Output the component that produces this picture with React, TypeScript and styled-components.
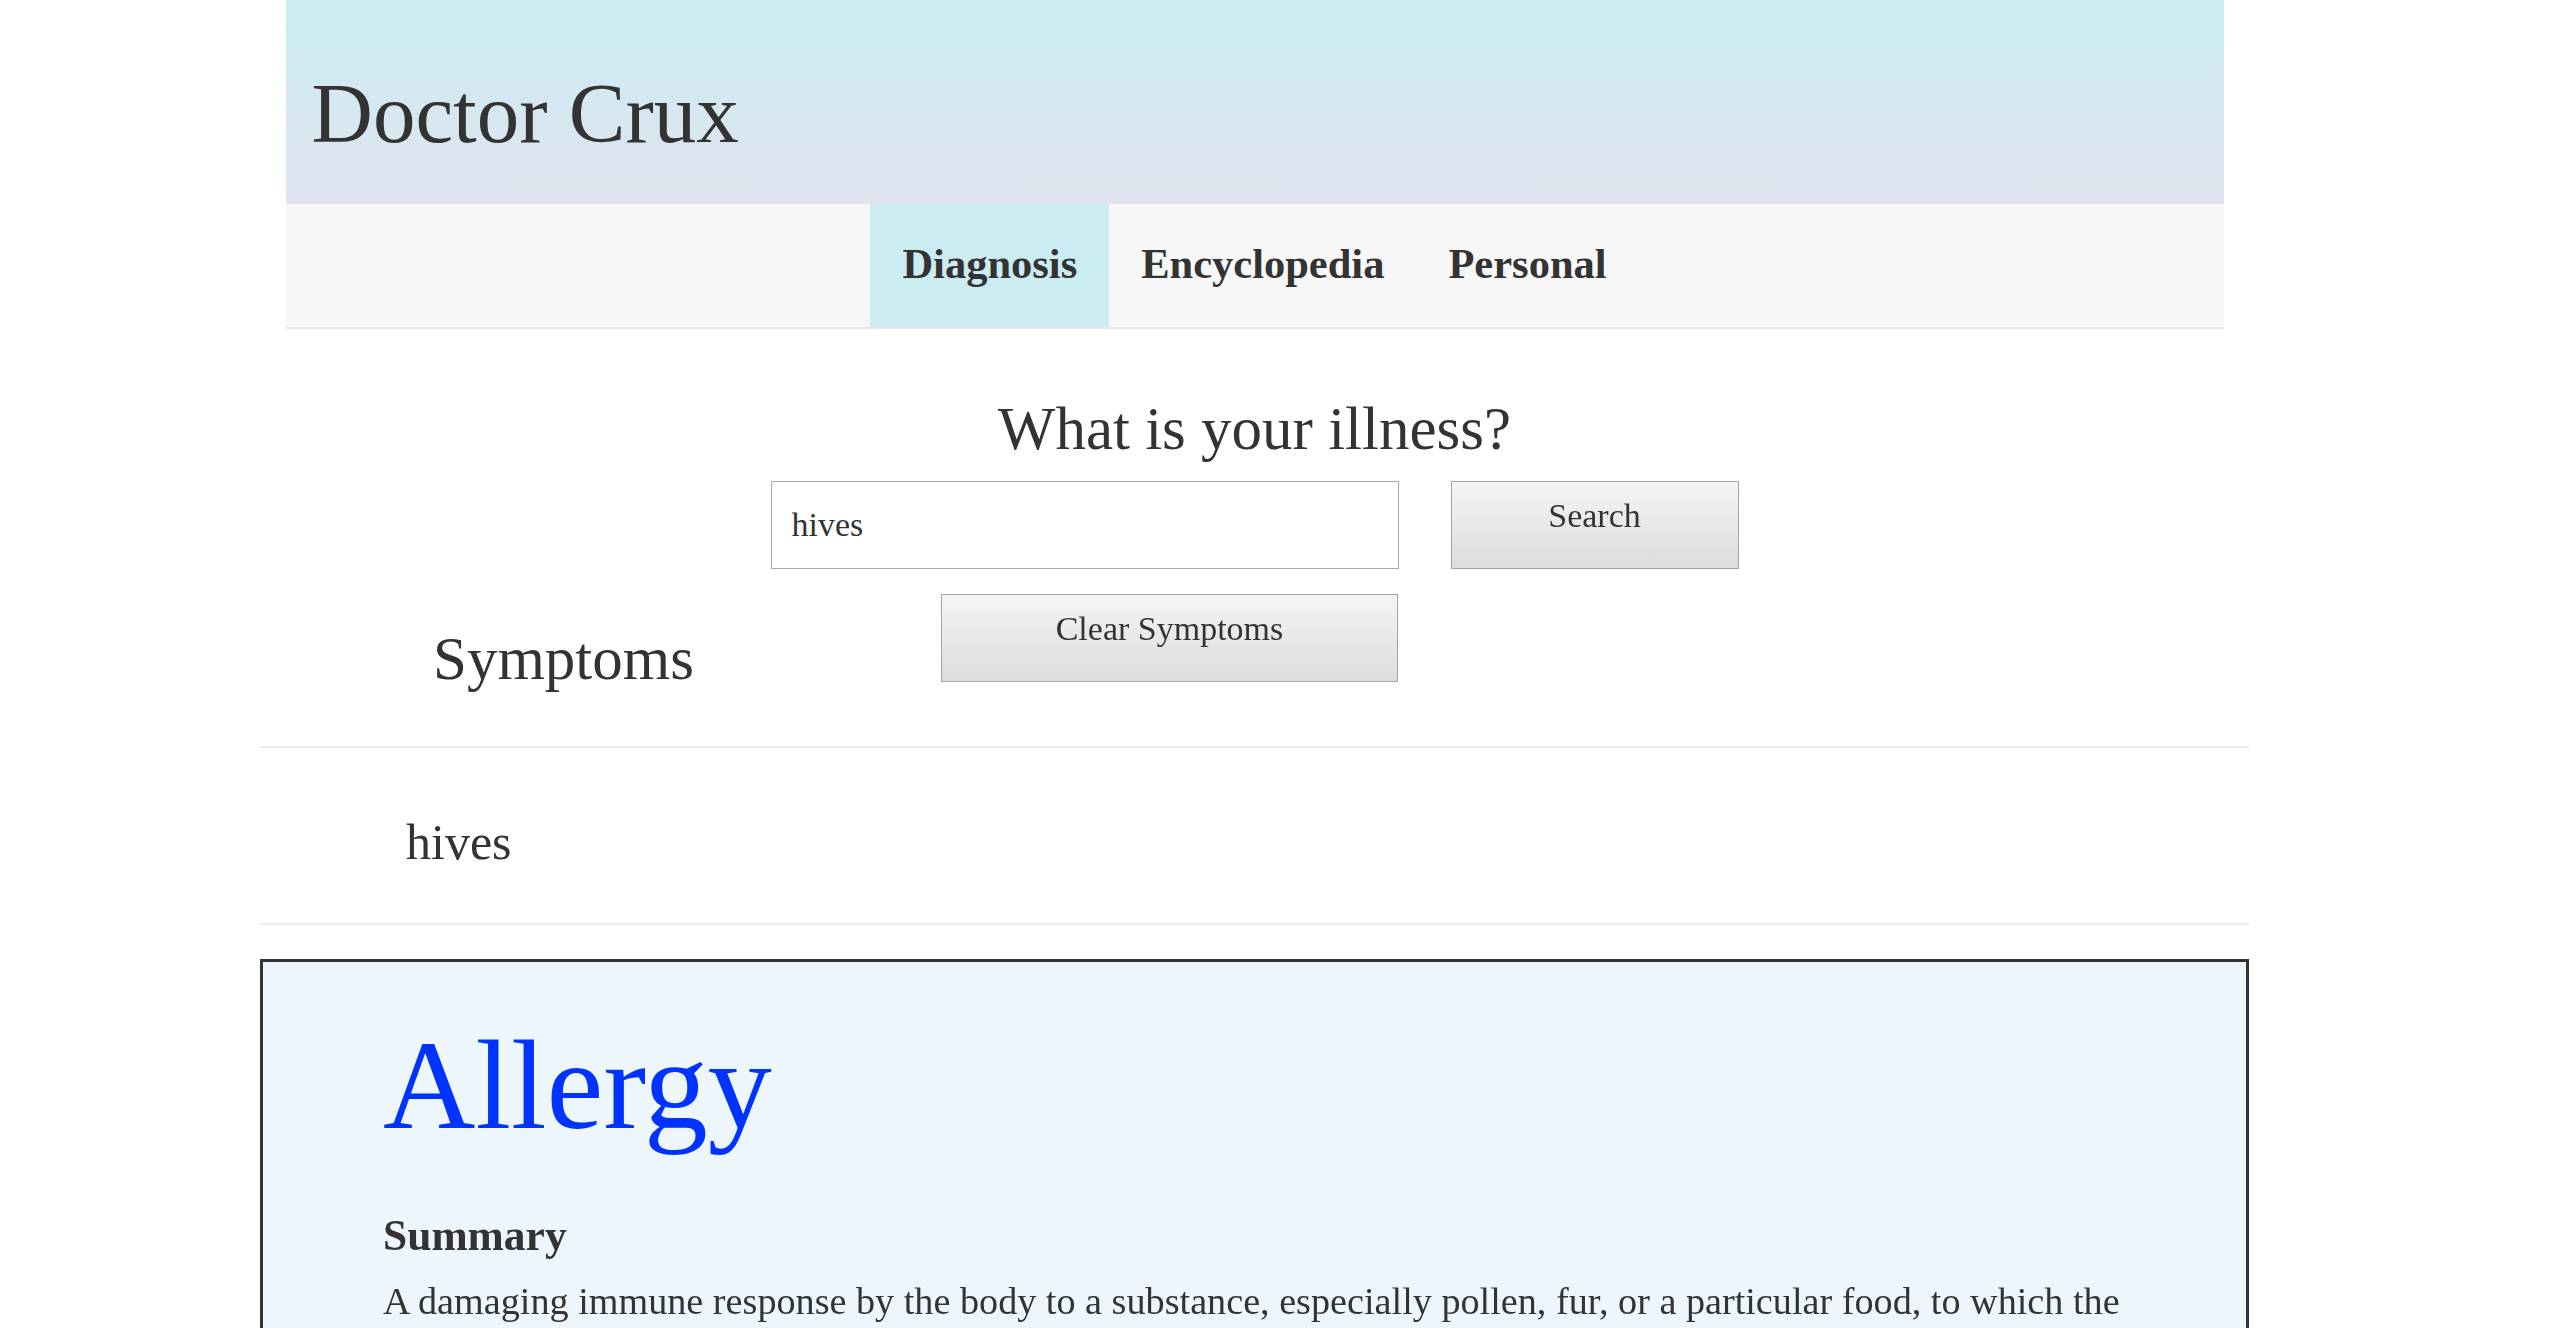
import React, { useEffect, useRef } from "react";
import styled, { createGlobalStyle } from "styled-components";

const GlobalStyle = createGlobalStyle`
  html, body {
    margin: 0;
    padding: 0;
    background: #ffffff;
  }
  body {
    font-family: "Liberation Serif", "Times New Roman", serif;
    color: #333333;
  }
  * { box-sizing: border-box; }
`;

const Page = styled.div`
  width: 2509px;
  padding-bottom: 80px;
`;

const Header = styled.header`
  width: 1938px;
  margin: 0 auto;
`;

const Banner = styled.div`
  background: linear-gradient(to bottom, #cbecf3, #dfe4ef);
  padding: 64px 26px 42px;
`;

const SiteTitle = styled.h1`
  margin: 0;
  font-size: 85px;
  line-height: 98px;
  font-weight: normal;
  color: #333333;
`;

const Nav = styled.nav`
  display: flex;
  justify-content: center;
  background: #f7f7f7;
  border-bottom: 2px solid #e6e6e6;
`;

const NavItem = styled.a<{ $active?: boolean }>`
  display: block;
  padding: 35px 32px 39px;
  font-size: 42.5px;
  line-height: 49px;
  font-weight: bold;
  color: #333333;
  text-decoration: none;
  background: ${(p) => (p.$active ? "#cbecf3" : "transparent")};
`;

const Main = styled.main`
  width: 1989px;
  margin: 0 auto;
`;

const SearchTitle = styled.h2`
  margin: 65px 0 0;
  font-size: 61px;
  line-height: 70px;
  font-weight: normal;
  text-align: center;
`;

const SearchRow = styled.div`
  display: flex;
  justify-content: center;
  gap: 52px;
  margin-top: 17px;
`;

const SearchInput = styled.input`
  width: 628px;
  height: 88px;
  border: 1px solid #a9a9a9;
  padding: 0 20px;
  font-family: "Liberation Serif", "Times New Roman", serif;
  font-size: 34px;
  color: #333333;
  background: #ffffff;
  outline: none;
  caret-color: #333333;
`;

const GrayButton = styled.button<{ $width: number }>`
  width: ${(p) => p.$width}px;
  height: 88px;
  padding: 14px 0 33px;
  border: 1px solid #a3a3a3;
  border-radius: 0;
  background: linear-gradient(to bottom, #f5f5f5, #dcdcdc);
  font-family: "Liberation Serif", "Times New Roman", serif;
  font-size: 34px;
  line-height: 39px;
  color: #333333;
  text-align: center;
  cursor: pointer;
`;

const ToolsRow = styled.div`
  display: grid;
  grid-template-columns: 681px 457px;
  align-items: start;
  margin-top: 25px;
`;

const SectionTitle = styled.h2`
  margin: 30px 0 0 173px;
  font-size: 61px;
  line-height: 70px;
  font-weight: normal;
`;

const Divider = styled.hr<{ $gap: number }>`
  margin: ${(p) => p.$gap}px 0 0;
  border: 0;
  border-top: 2px solid #ececec;
  height: 0;
`;

const SymptomList = styled.ul`
  list-style: none;
  margin: 65px 0 0;
  padding: 0 0 0 146px;
`;

const SymptomItem = styled.li`
  font-size: 50px;
  line-height: 58px;
`;

const DiseaseCard = styled.section`
  margin-top: 34px;
  border: 3px solid #333333;
  background: #eef6fd;
  padding: 50px 80px 120px 120px;
`;

const DiseaseName = styled.h1`
  margin: 0;
  font-size: 128px;
  line-height: 147px;
  font-weight: normal;
  color: #0033ff;
`;

const InfoHeading = styled.h3`
  margin: 51px 0 0;
  font-size: 43.5px;
  line-height: 50px;
  font-weight: bold;
`;

const InfoText = styled.p`
  margin: 19px 0 0;
  font-size: 38.2px;
  line-height: 44px;
`;

export default function App() {
  const inputRef = useRef<HTMLInputElement>(null);

  useEffect(() => {
    const el = inputRef.current;
    if (el) {
      el.focus();
      el.setSelectionRange(el.value.length, el.value.length);
    }
  }, []);

  return (
    <Page>
      <GlobalStyle />
      <Header>
        <Banner>
          <SiteTitle>Doctor Crux</SiteTitle>
        </Banner>
        <Nav>
          <NavItem href="#" $active>
            Diagnosis
          </NavItem>
          <NavItem href="#">Encyclopedia</NavItem>
          <NavItem href="#">Personal</NavItem>
        </Nav>
      </Header>
      <Main>
        <SearchTitle>What is your illness?</SearchTitle>
        <SearchRow>
          <SearchInput ref={inputRef} type="text" defaultValue="hives" autoFocus />
          <GrayButton $width={288}>Search</GrayButton>
        </SearchRow>
        <ToolsRow>
          <SectionTitle>Symptoms</SectionTitle>
          <GrayButton $width={457}>Clear Symptoms</GrayButton>
        </ToolsRow>
        <Divider $gap={52} />
        <SymptomList>
          <SymptomItem>hives</SymptomItem>
        </SymptomList>
        <Divider $gap={52} />
        <DiseaseCard>
          <DiseaseName>Allergy</DiseaseName>
          <InfoHeading>Summary</InfoHeading>
          <InfoText>
            A damaging immune response by the body to a substance, especially
            pollen, fur, or a particular food, to which the body has become
            hypersensitive.
          </InfoText>
          <InfoHeading>Symptoms</InfoHeading>
          <InfoText>
            Hives, itching, sneezing, a runny or blocked nose, red and watery
            eyes, wheezing and coughing, swelling of the lips, tongue, eyes or
            face.
          </InfoText>
          <InfoHeading>Treatment</InfoHeading>
          <InfoText>
            Avoid the allergen where possible; antihistamines and nasal sprays.
          </InfoText>
        </DiseaseCard>
      </Main>
    </Page>
  );
}
